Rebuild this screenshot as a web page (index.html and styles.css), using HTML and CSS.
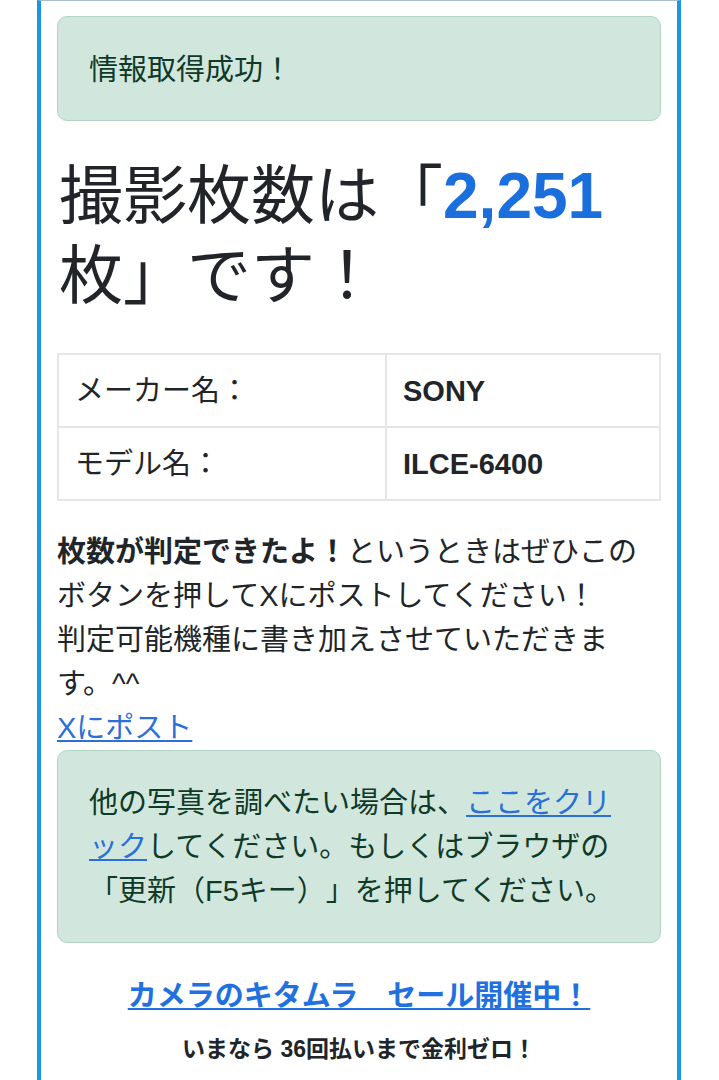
FILE: index.html
```html
<!DOCTYPE html>
<html lang="ja">

<head>
    <meta charset="utf-8">
    <title>撮影枚数チェッカー</title>
    <link rel="stylesheet" href="styles.css">
</head>

<body>
    <div class="container">

        <div class="alert">情報取得成功！</div>

        <h1 class="result">撮影枚数は「<span class="count">2,251</span>枚」です！</h1>

        <table class="info">
            <tr>
                <td class="label">メーカー名：</td>
                <td class="value">SONY</td>
            </tr>
            <tr>
                <td class="label">モデル名：</td>
                <td class="value">ILCE-6400</td>
            </tr>
        </table>

        <p class="note">
            <b>枚数が判定できたよ！</b>というときはぜひこのボタンを押してXにポストしてください！<br>
            判定可能機種に書き加えさせていただきます。^^<br>
            <a href="#">Xにポスト</a>
        </p>

        <div class="alert again">
            他の写真を調べたい場合は、<a href="#">ここをクリック</a>してください。もしくはブラウザの「更新（F5キー）」を押してください。
        </div>

        <div class="promo">
            <a href="#">カメラのキタムラ　セール開催中！</a>
            <p>いまなら 36回払いまで金利ゼロ！</p>
        </div>

    </div>
</body>

</html>
```

FILE: styles.css
```css
body {
    margin: 0;
    padding: 0;
    background-color: white;
    font-family: "Liberation Sans", "Noto Sans CJK JP", sans-serif;
    font-size: 29px;
    line-height: 44px;
    color: #212529;
    text-spacing-trim: space-all;
}

a {
    color: #2b6fd8;
}

.container {
    width: 604px;
    margin-left: 37px;
    padding: 15px 16px 0;
    border-left: 4px solid #1a96e6;
    border-right: 4px solid #1a96e6;
    border-top: 1px solid #a9bccb;
    min-height: 1080px;
}

.alert {
    background-color: #d1e7dd;
    border: 1px solid #b3d3c4;
    border-radius: 10px;
    color: #0f3a28;
    padding: 31px 31px 28px;
    margin-bottom: 35px;
}

.result {
    font-size: 64px;
    line-height: 80px;
    font-weight: normal;
    margin: 0 0 37px 2px;
}

.count {
    color: #1a6fdc;
    font-weight: bold;
}

.info {
    width: 100%;
    border-collapse: collapse;
    margin-bottom: 29px;
}

.info td {
    border: 2px solid #e6e6e6;
    height: 71px;
    padding: 0 16px;
}

.info .label {
    width: 294px;
}

.info .value {
    font-weight: bold;
}

.note {
    margin: 0;
}

.again {
    margin-top: 0;
    padding: 30px 31px 29px;
    margin-bottom: 31px;
}

.promo {
    text-align: center;
}

.promo a {
    font-weight: bold;
    color: #2170df;
}

.promo p {
    margin: 14px 0 0;
    font-size: 23px;
    line-height: 35px;
    font-weight: bold;
}
```
